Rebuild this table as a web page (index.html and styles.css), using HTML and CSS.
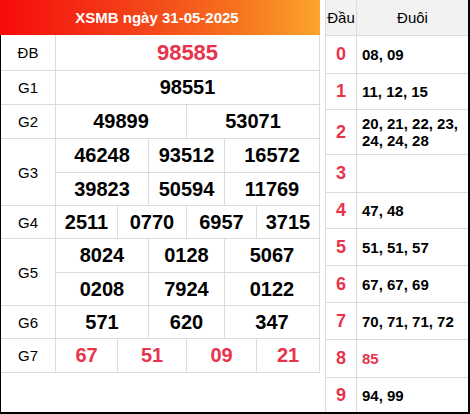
FILE: index.html
```html
<!DOCTYPE html>
<html lang="vi">
<head>
<meta charset="utf-8">
<title>XSMB ngày 31-05-2025</title>
<link rel="stylesheet" href="styles.css">
</head>
<body>
<div class="wrap">
  <div class="left">
    <div class="title">XSMB ngày 31-05-2025</div>
    <div class="lbody">
      <div class="kq">
        <div class="lbl">ĐB</div>
        <div class="num red big c-all">98585</div>

        <div class="lbl">G1</div>
        <div class="num c-all">98551</div>

        <div class="lbl">G2</div>
        <div class="num c-h1">49899</div>
        <div class="num c-h2">53071</div>

        <div class="lbl span2">G3</div>
        <div class="num c-t1">46248</div>
        <div class="num c-t2">93512</div>
        <div class="num c-t3">16572</div>
        <div class="num c-t1">39823</div>
        <div class="num c-t2">50594</div>
        <div class="num c-t3">11769</div>

        <div class="lbl">G4</div>
        <div class="num c-q1">2511</div>
        <div class="num c-q2">0770</div>
        <div class="num c-q3">6957</div>
        <div class="num c-q4">3715</div>

        <div class="lbl span2">G5</div>
        <div class="num c-t1">8024</div>
        <div class="num c-t2">0128</div>
        <div class="num c-t3">5067</div>
        <div class="num c-t1">0208</div>
        <div class="num c-t2">7924</div>
        <div class="num c-t3">0122</div>

        <div class="lbl">G6</div>
        <div class="num c-t1">571</div>
        <div class="num c-t2">620</div>
        <div class="num c-t3">347</div>

        <div class="lbl">G7</div>
        <div class="num red c-q1">67</div>
        <div class="num red c-q2">51</div>
        <div class="num red c-q3">09</div>
        <div class="num red c-q4">21</div>
      </div>
    </div>
  </div>
  <div class="right">
    <div class="lt">
      <div class="th">Đầu</div>
      <div class="th">Đuôi</div>

      <div class="dau">0</div><div class="duoi">08, 09</div>
      <div class="dau">1</div><div class="duoi">11, 12, 15</div>
      <div class="dau">2</div><div class="duoi">20, 21, 22, 23, 24, 24, 28</div>
      <div class="dau">3</div><div class="duoi"></div>
      <div class="dau">4</div><div class="duoi">47, 48</div>
      <div class="dau">5</div><div class="duoi">51, 51, 57</div>
      <div class="dau">6</div><div class="duoi">67, 67, 69</div>
      <div class="dau">7</div><div class="duoi">70, 71, 71, 72</div>
      <div class="dau">8</div><div class="duoi red">85</div>
      <div class="dau last">9</div><div class="duoi last">94, 99</div>
    </div>
  </div>
</div>
</body>
</html>
```

FILE: styles.css
```css
* { box-sizing: border-box; }

html, body {
  margin: 0;
  padding: 0;
  background: #fff;
}

body {
  font-family: "Liberation Sans", Arial, sans-serif;
  color: #000;
}

.wrap {
  width: 470px;
  height: 414px;
  display: flex;
  border-bottom: 2px solid #000;
}

.left {
  width: 320px;
  display: flex;
  flex-direction: column;
}

.title {
  height: 35px;
  display: flex;
  align-items: center;
  justify-content: center;
  padding-right: 6px;
  background: linear-gradient(to right, #f50a0a 0%, #f3451a 45%, #f7741f 75%, #fba52c 100%);
  color: #fff;
  font-weight: bold;
  font-size: 15px;
}

.lbody {
  flex: 1;
  border-left: 1px solid #000;
}

.kq {
  display: grid;
  grid-template-columns: 55px 62px 31px 38px 38px 32px 63px;
  grid-template-rows: 36px 34px 34px 34px 33px 33px 34px 33px 33px 34px;
}

.kq > div {
  border-right: 1px solid #dcdcdc;
  border-bottom: 1px solid #dcdcdc;
  display: flex;
  align-items: center;
  justify-content: center;
}

.lbl {
  grid-column: 1 / 2;
  font-size: 15px;
}

.span2 { grid-row: span 2; }

.num {
  font-weight: bold;
  font-size: 20px;
}

.big { font-size: 22px; }

.red { color: #e8344b; }

.c-all { grid-column: 2 / 8; }
.c-h1 { grid-column: 2 / 5; }
.c-h2 { grid-column: 5 / 8; }
.c-t1 { grid-column: 2 / 4; }
.c-t2 { grid-column: 4 / 6; }
.c-t3 { grid-column: 6 / 8; }
.c-q1 { grid-column: 2 / 3; }
.c-q2 { grid-column: 3 / 5; }
.c-q3 { grid-column: 5 / 7; }
.c-q4 { grid-column: 7 / 8; }

.right {
  margin-left: 5px;
  flex: 1;
  border-left: 1px solid #dcdcdc;
  border-right: 2px solid #000;
}

.lt {
  display: grid;
  grid-template-columns: 31px 1fr;
  grid-template-rows: 36px 38px 36px 45px 38px 36px 37px 37px 37px 38px 34px;
}

.lt > div {
  border-bottom: 1px solid #dcdcdc;
  display: flex;
  align-items: center;
}

.lt > .last { border-bottom: none; }

.th {
  background: #f2f2f2;
  font-size: 15px;
  justify-content: center;
}

.th:first-child { border-right: 1px solid #dcdcdc; }

.dau {
  justify-content: center;
  border-right: 1px solid #dcdcdc;
  color: #e8344b;
  font-weight: bold;
  font-size: 18px;
}

.duoi {
  padding-left: 5px;
  padding-right: 4px;
  font-weight: bold;
  font-size: 15px;
  line-height: 17px;
}
```
